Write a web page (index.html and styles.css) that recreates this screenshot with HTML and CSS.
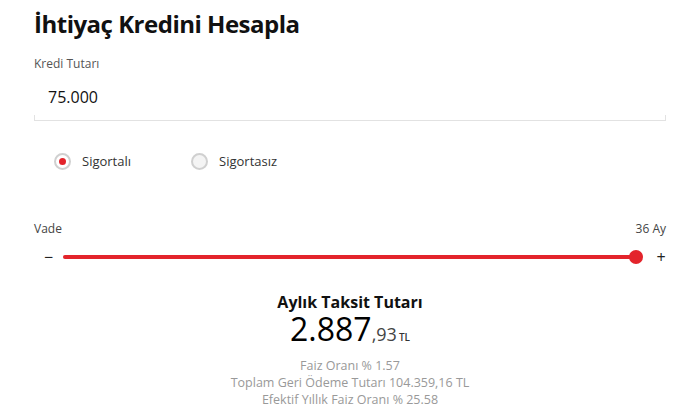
FILE: index.html
```html
<!DOCTYPE html>
<html lang="tr">
<head>
    <meta charset="UTF-8">
    <meta name="viewport" content="width=device-width, initial-scale=1.0">
    <title>İhtiyaç Kredini Hesapla</title>
    <link rel="stylesheet" href="styles.css">
</head>
<body>

    <div class="calculator">
        <h1>İhtiyaç Kredini Hesapla</h1>

        <div class="field">
            <label class="field-label">Kredi Tutarı</label>
            <div class="field-input">75.000</div>
        </div>

        <div class="radios">
            <label class="radio checked"><span class="dot"></span>Sigortalı</label>
            <label class="radio"><span class="dot"></span>Sigortasız</label>
        </div>

        <div class="term">
            <div class="term-head">
                <span>Vade</span>
                <span>36 Ay</span>
            </div>
            <div class="slider">
                <span class="step minus">&minus;</span>
                <div class="track">
                    <div class="fill" style="width: 100%;"></div>
                    <span class="thumb"></span>
                </div>
                <span class="step plus">+</span>
            </div>
        </div>

        <div class="result">
            <h2>Aylık Taksit Tutarı</h2>
            <div class="amount">2.887<span class="cents">,93</span><span class="cur">TL</span></div>
            <ul class="details">
                <li>Faiz Oranı % 1.57</li>
                <li>Toplam Geri Ödeme Tutarı 104.359,16 TL</li>
                <li>Efektif Yıllık Faiz Oranı % 25.58</li>
            </ul>
        </div>
    </div>

</body>
</html>
```

FILE: styles.css
```css
* {
    margin: 0;
    padding: 0;
    box-sizing: border-box;
}

body {
    font-family: 'Open Sans', 'Noto Sans', sans-serif;
    background-color: #fff;
    color: #111;
}

.calculator {
    width: 632px;
    margin-left: 34px;
    padding-top: 7px;
}

h1 {
    font-size: 24px;
    font-weight: 700;
    line-height: 34px;
    color: #111;
    letter-spacing: -0.5px;
}

.field {
    margin-top: 15px;
}

.field-label {
    display: block;
    font-size: 12px;
    color: #555;
    line-height: 16px;
}

.field-input {
    font-size: 16px;
    line-height: 22px;
    padding: 14px 14px 12px;
    border-bottom: 1px solid #e2e2e2;
    position: relative;
}

.field-input::before,
.field-input::after {
    content: '';
    position: absolute;
    bottom: 0;
    width: 1px;
    height: 5px;
    background-color: #e2e2e2;
}

.field-input::before { left: 0; }
.field-input::after { right: 0; }

.radios {
    display: flex;
    gap: 60px;
    padding-left: 20px;
    margin-top: 31px;
}

.radio {
    display: flex;
    align-items: center;
    gap: 11px;
    font-size: 13px;
    color: #333;
    line-height: 18px;
}

.dot {
    width: 17px;
    height: 17px;
    border: 2px solid #d0d0d0;
    border-radius: 50%;
    background-color: #f4f4f4;
    display: flex;
    align-items: center;
    justify-content: center;
}

.radio.checked .dot {
    background-color: #fff;
}

.radio.checked .dot::after {
    content: '';
    width: 7px;
    height: 7px;
    border-radius: 50%;
    background-color: #e3242b;
}

.term {
    margin-top: 51px;
}

.term-head {
    display: flex;
    justify-content: space-between;
    font-size: 12px;
    color: #444;
    line-height: 16px;
}

.slider {
    display: flex;
    align-items: center;
    margin-top: 10px;
    height: 20px;
}

.step {
    text-align: center;
    font-size: 16px;
    color: #222;
    line-height: 16px;
}

.minus {
    width: 29px;
}

.plus {
    width: 10px;
    margin-left: 20px;
}

.track {
    flex: 1;
    height: 4px;
    background-color: #e5e5e5;
    border-radius: 2px;
    position: relative;
}

.fill {
    height: 4px;
    background-color: #e3242b;
    border-radius: 2px;
}

.thumb {
    position: absolute;
    right: -7px;
    top: -5px;
    width: 14px;
    height: 14px;
    border-radius: 50%;
    background-color: #e3242b;
}

.result {
    text-align: center;
    margin-top: 24px;
}

h2 {
    font-size: 16px;
    font-weight: 700;
    line-height: 22px;
    color: #111;
}

.amount {
    font-size: 32px;
    line-height: 32px;
    color: #000;
}

.cents {
    font-size: 18px;
    color: #444;
}

.cur {
    font-size: 10px;
    font-weight: 600;
    margin-left: 2px;
    color: #333;
}

.details {
    list-style: none;
    margin-top: 4px;
    font-size: 12.5px;
    line-height: 17px;
    color: #999;
}
```
